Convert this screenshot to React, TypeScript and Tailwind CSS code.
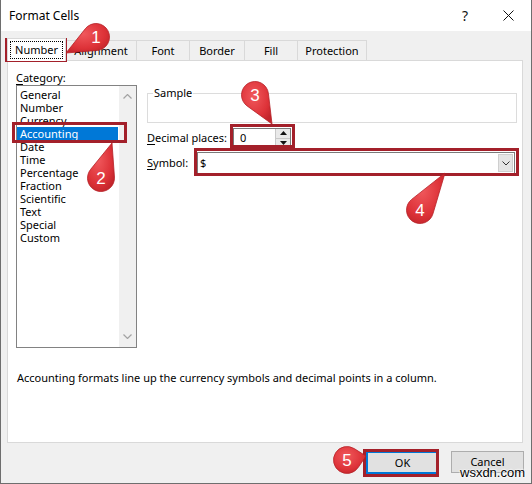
import React from "react";

type Marker = { n: string; cx: number; cy: number; tx: number; ty: number };

const markers: Marker[] = [
  { n: "1", cx: 96, cy: 37, tx: 66, ty: 53 },
  { n: "2", cx: 101, cy: 178, tx: 112, ty: 143 },
  { n: "3", cx: 255, cy: 95, tx: 272, ty: 124 },
  { n: "4", cx: 420, cy: 210, tx: 445, ty: 173 },
  { n: "5", cx: 347, cy: 460, tx: 366, ty: 456 },
];

function tear(m: Marker, r: number) {
  const dx = m.tx - m.cx;
  const dy = m.ty - m.cy;
  const d = Math.sqrt(dx * dx + dy * dy);
  const th = Math.atan2(dy, dx);
  const a = Math.acos(r / d);
  const p1x = m.cx + r * Math.cos(th + a);
  const p1y = m.cy + r * Math.sin(th + a);
  const p2x = m.cx + r * Math.cos(th - a);
  const p2y = m.cy + r * Math.sin(th - a);
  return `M${m.tx} ${m.ty} L${p1x.toFixed(2)} ${p1y.toFixed(2)} A${r} ${r} 0 1 1 ${p2x.toFixed(2)} ${p2y.toFixed(2)} Z`;
}

const categories = [
  "General",
  "Number",
  "Currency",
  "Accounting",
  "Date",
  "Time",
  "Percentage",
  "Fraction",
  "Scientific",
  "Text",
  "Special",
  "Custom",
];

function Tab({ label, w }: { label: string; w: string }) {
  return (
    <div
      className={`${w} h-[20px] flex items-center justify-center border-t border-r border-[#d9d9d9] bg-[#f0f0f0]`}
    >
      {label}
    </div>
  );
}

export default function App() {
  return (
    <div className="relative w-[532px] h-[484px] bg-[#f0f0f0] border-l border-r border-b border-[#6e6e6e] flex flex-col text-[11px] leading-[16px] text-black font-['Noto_Sans',sans-serif] overflow-hidden whitespace-nowrap">
      {/* Title bar */}
      <div className="h-[31px] bg-white flex items-center pl-[8px] shrink-0">
        <span className="text-[12px]">Format Cells</span>
        <span className="ml-auto text-[14px] mr-[35px] text-[#111]">?</span>
        <svg width="11" height="11" viewBox="0 0 11 11" className="mr-[17px]">
          <path d="M0.5 0.5 L10.5 10.5 M10.5 0.5 L0.5 10.5" stroke="#111" strokeWidth="1" />
        </svg>
      </div>

      {/* Tabs */}
      <div className="mt-[7px] ml-[6px] h-[22px] flex items-end shrink-0">
        <div className="relative z-10 w-[59px] h-[23px] -mb-px bg-white border-l border-t border-r border-[#d9d9d9] flex items-center justify-center">
          <div className="px-[4px] h-[18px] flex items-center border border-dotted border-black">Number</div>
        </div>
        <Tab label="Alignment" w="w-[71px]" />
        <Tab label="Font" w="w-[53px]" />
        <Tab label="Border" w="w-[55px]" />
        <Tab label="Fill" w="w-[53px]" />
        <Tab label="Protection" w="w-[69px]" />
      </div>

      {/* Panel */}
      <div className="ml-[6px] w-[516px] h-[383px] bg-white border border-[#d9d9d9] pl-[8px] pt-[9px] flex flex-col shrink-0">
        <div className="h-[15px] leading-[15px]">
          <u className="underline-offset-2">C</u>ategory:
        </div>
        <div className="flex items-start">
          {/* Listbox */}
          <div className="w-[121px] h-[263px] border border-[#828282] flex">
            <div className="flex-1 pt-[2px] pr-[1px] flex flex-col">
              {categories.map((c) => (
                <div
                  key={c}
                  className={`h-[13px] leading-[13px] pl-[3px] ${
                    c === "Accounting" ? "bg-[#0078d7] text-white" : ""
                  }`}
                >
                  {c}
                </div>
              ))}
            </div>
            <div className="w-[17px] bg-[#f0f0f0] flex flex-col justify-between items-center py-[8px]">
              <svg width="9" height="5" viewBox="0 0 9 5">
                <path d="M0.5 4.5 L4.5 0.5 L8.5 4.5" fill="none" stroke="#a3a3a3" strokeWidth="1.2" />
              </svg>
              <svg width="9" height="5" viewBox="0 0 9 5">
                <path d="M0.5 0.5 L4.5 4.5 L8.5 0.5" fill="none" stroke="#a3a3a3" strokeWidth="1.2" />
              </svg>
            </div>
          </div>

          {/* Right column */}
          <div className="ml-[10px] pt-[8px] flex flex-col">
            <div className="relative w-[370px] h-[30px] border border-[#dcdcdc]">
              <span className="absolute -top-[9px] left-[5px] bg-white px-[1px]">Sample</span>
            </div>
            <div className="mt-[5px] h-[20px] flex items-center">
              <div className="w-[86px]">
                <u className="underline-offset-2">D</u>ecimal places:
              </div>
              <div className="w-[58px] h-[20px] border border-[#7a7a7a] flex">
                <div className="flex-1 pl-[6px] leading-[18px]">0</div>
                <div className="w-[15px] flex flex-col border-l border-[#c8c8c8] bg-[#e9e9e9]">
                  <div className="flex-1 flex items-center justify-center border-b border-[#c8c8c8]">
                    <svg width="7" height="4" viewBox="0 0 7 4">
                      <path d="M0 4 L3.5 0 L7 4 Z" fill="#111" />
                    </svg>
                  </div>
                  <div className="flex-1 flex items-center justify-center">
                    <svg width="7" height="4" viewBox="0 0 7 4">
                      <path d="M0 0 L3.5 4 L7 0 Z" fill="#111" />
                    </svg>
                  </div>
                </div>
              </div>
            </div>
            <div className="mt-[4px] h-[22px] flex items-center">
              <div className="w-[50px]">
                <u className="underline-offset-2">S</u>ymbol:
              </div>
              <div className="w-[318px] h-[22px] border border-[#7a7a7a] flex items-center">
                <div className="flex-1 pl-[2px]">$</div>
                <div className="w-[15px] h-[18px] mr-[1px] bg-[#e5e5e5] border border-[#cfcfcf] flex items-center justify-center">
                  <svg width="8" height="5" viewBox="0 0 8 5">
                    <path d="M0.5 0.5 L4 4 L7.5 0.5" fill="none" stroke="#333" strokeWidth="1" />
                  </svg>
                </div>
              </div>
            </div>
          </div>
        </div>
        <div className="mt-[22px] ml-[1px]">
          Accounting formats line up the currency symbols and decimal points in a column.
        </div>
      </div>

      {/* Buttons */}
      <div className="mt-[8px] flex justify-end pr-[7px] gap-[12px]">
        <div className="w-[73px] h-[23px] bg-[#e1e1e1] border-2 border-[#0078d7] flex items-center justify-center">
          OK
        </div>
        <div className="w-[73px] h-[22px] bg-[#e1e1e1] border border-[#adadad] flex items-center justify-center">
          Cancel
        </div>
      </div>

      {/* Annotation boxes */}
      <div className="absolute left-[4px] top-[38px] w-[62px] h-[24px] border-[3px] border-[#a3202a] pointer-events-none" />
      <div className="absolute left-[11px] top-[122px] w-[115px] h-[21px] border-[3px] border-[#a3202a] pointer-events-none" />
      <div className="absolute left-[229px] top-[124px] w-[65px] h-[24px] border-[3px] border-[#a3202a] pointer-events-none" />
      <div className="absolute left-[193px] top-[148px] w-[325px] h-[28px] border-[3px] border-[#a3202a] pointer-events-none" />
      <div className="absolute left-[362px] top-[449px] w-[76px] h-[28px] border-[3px] border-[#a3202a] pointer-events-none" />

      {/* Markers */}
      <svg className="absolute left-[-1px] top-0 pointer-events-none" width="532" height="484" viewBox="0 0 532 484">
        <defs>
          <radialGradient id="mg" cx="0.4" cy="0.35" r="0.7">
            <stop offset="0" stopColor="#f0585c" />
            <stop offset="0.7" stopColor="#dd3238" />
            <stop offset="1" stopColor="#c2252b" />
          </radialGradient>
        </defs>
        {markers.map((m) => (
          <g key={m.n}>
            <path d={tear(m, 13.5)} fill="url(#mg)" stroke="#b51f26" strokeWidth="0.8" />
            <text
              x={m.cx}
              y={m.cy + 6}
              textAnchor="middle"
              fill="#ffffff"
              fontSize="17"
              fontFamily="'Liberation Sans', Arial, sans-serif"
            >
              {m.n}
            </text>
          </g>
        ))}
      </svg>

      {/* Watermark */}
      <div className="absolute left-[459px] top-[465px] text-[13px] leading-[16px] text-black font-['Liberation_Sans',sans-serif] [text-shadow:0_0_2px_#fff,0_0_2px_#fff,0_0_2px_#fff]">
        wsxdn.com
      </div>
    </div>
  );
}
